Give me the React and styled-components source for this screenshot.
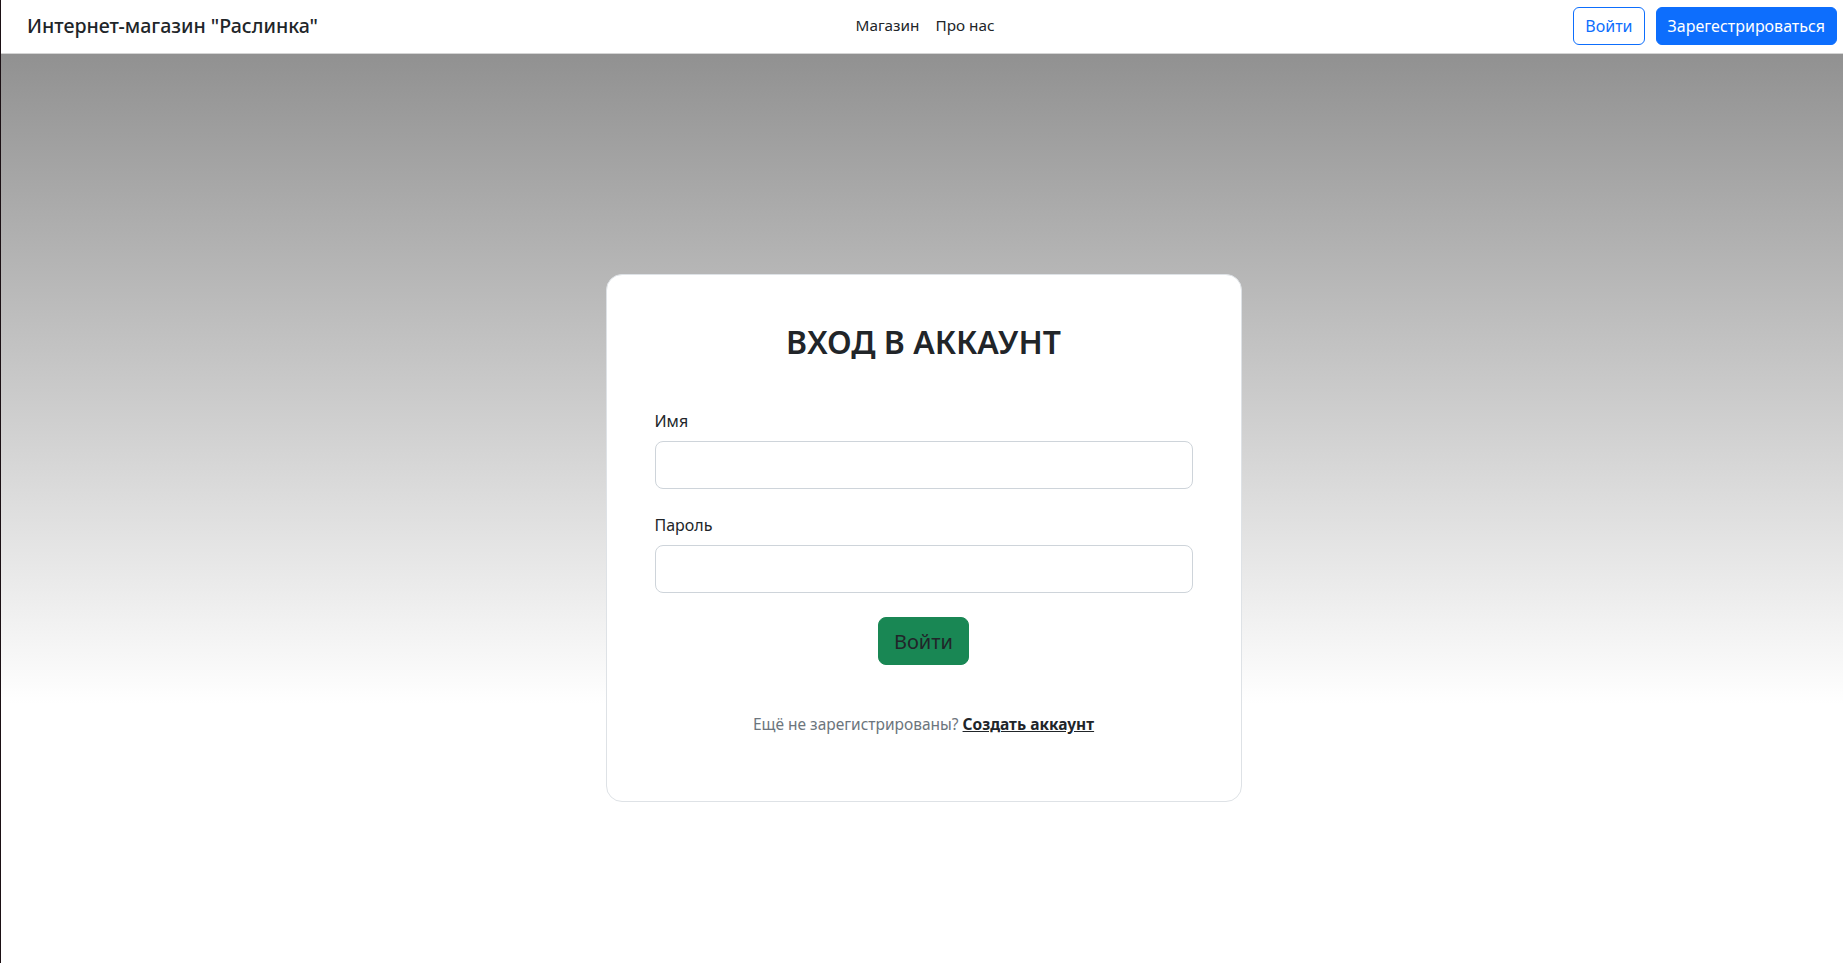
import React from "react";
import styled, { createGlobalStyle } from "styled-components";

const GlobalStyle = createGlobalStyle`
  html, body {
    margin: 0;
    padding: 0;
    background: #fff;
  }
  body {
    font-family: "Noto Sans", "Open Sans", sans-serif;
    font-size: 16px;
    line-height: 1.5;
    color: #212529;
  }
  * {
    box-sizing: border-box;
  }
`;

const App = () => {
  return (
    <Page>
      <GlobalStyle />
      <Navbar>
        <Brand>Интернет-магазин "Раслинка"</Brand>
        <NavLinks>
          <NavLink>Магазин</NavLink>
          <NavLink>Про нас</NavLink>
        </NavLinks>
        <NavActions>
          <Button variant="outline">Войти</Button>
          <Button variant="primary">Зарегестрироваться</Button>
        </NavActions>
      </Navbar>
      <Main>
        <Card>
          <Title>ВХОД В АККАУНТ</Title>
          <Field>
            <Label>Имя</Label>
            <Input type="text" />
          </Field>
          <Field>
            <Label>Пароль</Label>
            <Input type="password" />
          </Field>
          <SubmitRow>
            <SubmitButton>Войти</SubmitButton>
          </SubmitRow>
          <Hint>
            Ещё не зарегистрированы? <HintLink>Создать аккаунт</HintLink>
          </Hint>
        </Card>
      </Main>
    </Page>
  );
};

export default App;

const Page = styled.div`
  min-height: 100vh;
  display: flex;
  flex-direction: column;
  border-left: 1px solid #1b1014;
`;

const Navbar = styled.nav`
  height: 54px;
  display: grid;
  grid-template-columns: 1fr auto 1fr;
  align-items: center;
  padding: 0 6px 1px 26px;
  background: #fff;
  border-bottom: 1px solid #d4d4d4;
`;

const Brand = styled.div`
  font-size: 19.6px;
  font-weight: 500;
  color: #212529;
  white-space: nowrap;
`;

const NavLinks = styled.div`
  display: flex;
  padding: 0 14px 2px 0;
`;

const NavLink = styled.a`
  padding: 8px 8px;
  font-size: 15.3px;
  color: #212529;
  cursor: pointer;
`;

const NavActions = styled.div`
  display: flex;
  justify-content: flex-end;
  gap: 11px;
`;

const Button = styled.button`
  height: 38px;
  padding: 0 11px;
  font-family: inherit;
  font-size: 16px;
  border-radius: 6px;
  border: 1px solid #0d6efd;
  background: ${(p) => (p.variant === "primary" ? "#0d6efd" : "#fff")};
  color: ${(p) => (p.variant === "primary" ? "#fff" : "#0d6efd")};
  cursor: pointer;
`;

const Main = styled.main`
  flex: 1;
  display: flex;
  justify-content: center;
  align-items: flex-start;
  padding: 220px 0 60px 3px;
  background: linear-gradient(to bottom, #919191 0, #ffffff 650px, #ffffff 100%);
`;

const Card = styled.div`
  width: 636px;
  padding: 48px;
  background: #fff;
  border: 1px solid #dee2e6;
  border-radius: 16px;
`;

const Title = styled.h2`
  margin: 0 0 48px;
  text-align: center;
  font-size: 32px;
  font-weight: 600;
  line-height: 1.2;
  color: #212529;
`;

const Field = styled.div`
  margin-bottom: 24px;
`;

const Label = styled.label`
  display: block;
  margin-bottom: 8px;
  font-size: 16px;
  color: #212529;
`;

const Input = styled.input`
  display: block;
  width: 100%;
  height: 48px;
  padding: 8px 16px;
  font-family: inherit;
  font-size: 20px;
  border: 1px solid #ced4da;
  border-radius: 8px;
  background: #fff;
  outline: none;
`;

const SubmitRow = styled.div`
  display: flex;
  justify-content: center;
  margin-bottom: 48px;
`;

const SubmitButton = styled.button`
  height: 48px;
  padding: 0 15px;
  font-family: inherit;
  font-size: 20px;
  color: #212529;
  background: #198754;
  border: 1px solid #198754;
  border-radius: 8px;
  cursor: pointer;
`;

const Hint = styled.p`
  margin: 0 0 16px;
  text-align: center;
  font-size: 15.5px;
  color: #6c757d;
`;

const HintLink = styled.a`
  font-weight: 700;
  color: #212529;
  text-decoration: underline;
  cursor: pointer;
`;
